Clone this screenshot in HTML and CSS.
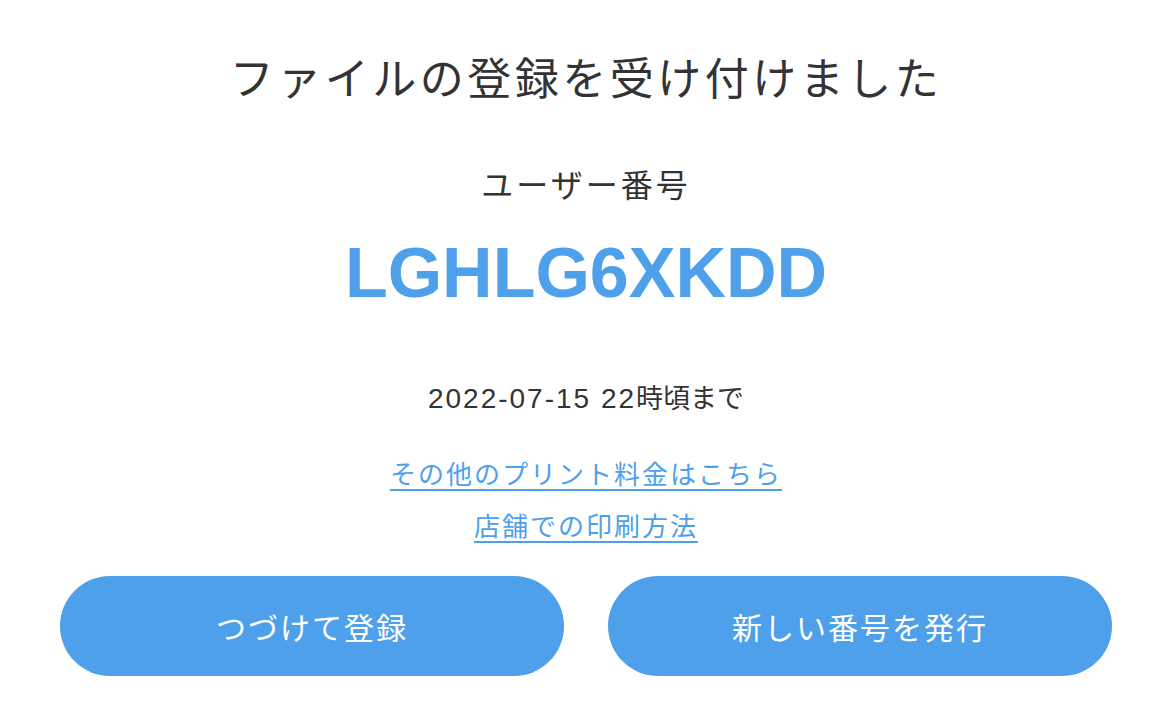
FILE: index.html
```html
<!DOCTYPE html>
<html lang="ja">
<head>
  <meta charset="UTF-8" />
  <meta name="viewport" content="width=device-width, initial-scale=1.0"/>
  <title>ファイルの登録を受け付けました</title>
  <link rel="stylesheet" href="styles.css">
</head>
<body>

  <!-- RESULT -->
  <main class="result">
    <h1 class="result-title">ファイルの登録を受け付けました</h1>

    <p class="user-label">ユーザー番号</p>
    <p class="user-code">LGHLG6XKDD</p>

    <p class="expire"><span class="expire-date">2022-07-15 22</span>時頃まで</p>

    <div class="links">
      <a href="#" class="link">その他のプリント料金はこちら</a>
      <a href="#" class="link">店舗での印刷方法</a>
    </div>

    <!-- BUTTONS -->
    <div class="actions">
      <button type="button" class="btn">つづけて登録</button>
      <button type="button" class="btn">新しい番号を発行</button>
    </div>
  </main>

</body>
</html>
```

FILE: styles.css
```css
* {
  box-sizing: border-box;
}

body {
  font-family: "Noto Sans CJK JP", "Noto Sans", sans-serif;
  background-color: #fff;
  color: #333;
  margin: 0;
  padding: 0 60px;
}

/* ===== RESULT ===== */
.result {
  display: flex;
  flex-direction: column;
  align-items: center;
  text-align: center;
}

.result-title {
  margin: 42px 0 0;
  font-size: 44px;
  font-weight: normal;
  line-height: 68px;
  letter-spacing: 3.5px;
}

.user-label {
  margin: 49px 0 0;
  font-size: 32px;
  line-height: 48px;
  letter-spacing: 3px;
}

.user-code {
  margin: 26px 0 0;
  font-family: "Liberation Sans", Arial, sans-serif;
  font-size: 70px;
  font-weight: bold;
  line-height: 80px;
  color: #4fa0ea;
}

.expire {
  margin: 66px 0 0;
  font-size: 27px;
  line-height: 36px;
}

.expire-date {
  font-family: "Liberation Sans", Arial, sans-serif;
  font-size: 28px;
  letter-spacing: 2px;
}

.links {
  display: flex;
  flex-direction: column;
  align-items: center;
  gap: 12px;
  margin-top: 36px;
}

.link {
  font-size: 26px;
  line-height: 40px;
  letter-spacing: 2px;
  color: #4fa0ea;
  text-decoration: underline;
  text-underline-offset: 5px;
}

/* ===== BUTTONS ===== */
.actions {
  display: flex;
  gap: 44px;
  width: 100%;
  margin-top: 31px;
}

.btn {
  flex: 1;
  height: 100px;
  border: none;
  border-radius: 50px;
  background-color: #4fa0ea;
  color: #fff;
  font-family: inherit;
  font-size: 30px;
  letter-spacing: 2px;
  cursor: pointer;
}
```
